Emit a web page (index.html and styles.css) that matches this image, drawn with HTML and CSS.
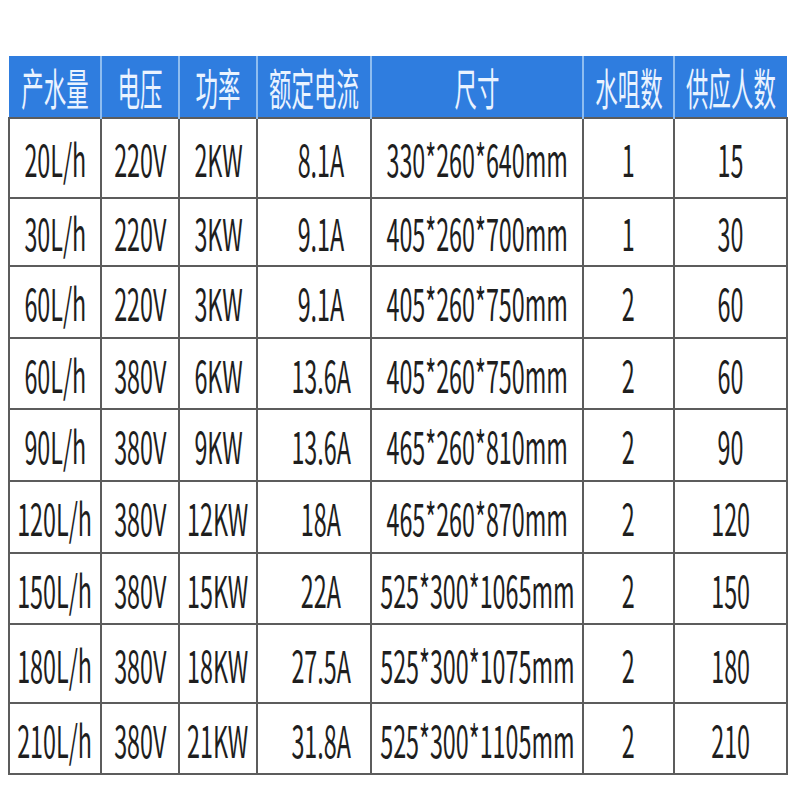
FILE: index.html
```html
<!DOCTYPE html>
<html lang="zh">
<head>
<meta charset="utf-8">
<title>产品参数表</title>
<link rel="stylesheet" href="styles.css">
</head>
<body>
<table class="spec">
  <colgroup>
    <col class="c1"><col class="c2"><col class="c3"><col class="c4"><col class="c5"><col class="c6"><col class="c7">
  </colgroup>
  <thead>
    <tr>
      <th><div class="cell"><span>产水量</span></div></th>
      <th><div class="cell"><span>电压</span></div></th>
      <th><div class="cell"><span>功率</span></div></th>
      <th><div class="cell"><span>额定电流</span></div></th>
      <th><div class="cell"><span>尺寸</span></div></th>
      <th><div class="cell"><span>水咀数</span></div></th>
      <th><div class="cell"><span>供应人数</span></div></th>
    </tr>
  </thead>
  <tbody>
    <tr><td><div class="cell"><span>20L/h</span></div></td><td><div class="cell"><span>220V</span></div></td><td><div class="cell"><span>2KW</span></div></td><td class="amp"><div class="cell"><span>8.1A</span></div></td><td><div class="cell"><span>330*260*640mm</span></div></td><td><div class="cell"><span>1</span></div></td><td><div class="cell"><span>15</span></div></td></tr>
    <tr><td><div class="cell"><span>30L/h</span></div></td><td><div class="cell"><span>220V</span></div></td><td><div class="cell"><span>3KW</span></div></td><td class="amp"><div class="cell"><span>9.1A</span></div></td><td><div class="cell"><span>405*260*700mm</span></div></td><td><div class="cell"><span>1</span></div></td><td><div class="cell"><span>30</span></div></td></tr>
    <tr><td><div class="cell"><span>60L/h</span></div></td><td><div class="cell"><span>220V</span></div></td><td><div class="cell"><span>3KW</span></div></td><td class="amp"><div class="cell"><span>9.1A</span></div></td><td><div class="cell"><span>405*260*750mm</span></div></td><td><div class="cell"><span>2</span></div></td><td><div class="cell"><span>60</span></div></td></tr>
    <tr><td><div class="cell"><span>60L/h</span></div></td><td><div class="cell"><span>380V</span></div></td><td><div class="cell"><span>6KW</span></div></td><td class="amp"><div class="cell"><span>13.6A</span></div></td><td><div class="cell"><span>405*260*750mm</span></div></td><td><div class="cell"><span>2</span></div></td><td><div class="cell"><span>60</span></div></td></tr>
    <tr><td><div class="cell"><span>90L/h</span></div></td><td><div class="cell"><span>380V</span></div></td><td><div class="cell"><span>9KW</span></div></td><td class="amp"><div class="cell"><span>13.6A</span></div></td><td><div class="cell"><span>465*260*810mm</span></div></td><td><div class="cell"><span>2</span></div></td><td><div class="cell"><span>90</span></div></td></tr>
    <tr><td><div class="cell"><span>120L/h</span></div></td><td><div class="cell"><span>380V</span></div></td><td><div class="cell"><span>12KW</span></div></td><td class="amp"><div class="cell"><span>18A</span></div></td><td><div class="cell"><span>465*260*870mm</span></div></td><td><div class="cell"><span>2</span></div></td><td><div class="cell"><span>120</span></div></td></tr>
    <tr><td><div class="cell"><span>150L/h</span></div></td><td><div class="cell"><span>380V</span></div></td><td><div class="cell"><span>15KW</span></div></td><td class="amp"><div class="cell"><span>22A</span></div></td><td><div class="cell"><span>525*300*1065mm</span></div></td><td><div class="cell"><span>2</span></div></td><td><div class="cell"><span>150</span></div></td></tr>
    <tr><td><div class="cell"><span>180L/h</span></div></td><td><div class="cell"><span>380V</span></div></td><td><div class="cell"><span>18KW</span></div></td><td class="amp"><div class="cell"><span>27.5A</span></div></td><td><div class="cell"><span>525*300*1075mm</span></div></td><td><div class="cell"><span>2</span></div></td><td><div class="cell"><span>180</span></div></td></tr>
    <tr><td><div class="cell"><span>210L/h</span></div></td><td><div class="cell"><span>380V</span></div></td><td><div class="cell"><span>21KW</span></div></td><td class="amp"><div class="cell"><span>31.8A</span></div></td><td><div class="cell"><span>525*300*1105mm</span></div></td><td><div class="cell"><span>2</span></div></td><td><div class="cell"><span>210</span></div></td></tr>
  </tbody>
</table>
</body>
</html>
```

FILE: styles.css
```css
html, body {
  margin: 0;
  padding: 0;
  background: #ffffff;
}

body {
  font-family: "Noto Sans CJK SC", "Noto Sans", sans-serif;
  padding: 56px 0 0 8px;
}

.spec {
  border-collapse: collapse;
  table-layout: fixed;
  width: 778px;
}

.c1 { width: 92px; }
.c2 { width: 78px; }
.c3 { width: 78px; }
.c4 { width: 114px; }
.c5 { width: 212px; }
.c6 { width: 91px; }
.c7 { width: 113px; }

.spec th,
.spec td {
  padding: 0;
  overflow: visible;
}

.spec th {
  background: #2f7ddf;
  color: #eaf3ff;
  font-weight: 400;
  height: 61px;
  border-left: 2px solid #8fbdf0;
  border-right: 2px solid #8fbdf0;
  border-top: 0;
  border-bottom: 0;
}

.spec th:first-child { border-left: 0; }
.spec th:last-child { border-right: 0; }

.spec td {
  border: 2px solid #5c5c5c;
  color: #1e1e1e;
}

.spec td.amp .cell {
  padding-left: 14px;
}

.cell {
  display: flex;
  justify-content: center;
  align-items: center;
  height: 100%;
  white-space: nowrap;
  font-size: 44px;
  line-height: 1;
}

.cell span {
  display: inline-block;
  flex-shrink: 0;
  transform: scaleX(0.53);
}

.spec th .cell span {
  transform: scaleX(0.51);
}

.spec tbody tr:nth-child(1) { height: 80px; }
.spec tbody tr:nth-child(2) { height: 68px; }
.spec tbody tr:nth-child(3) { height: 72px; }
.spec tbody tr:nth-child(4) { height: 71px; }
.spec tbody tr:nth-child(5) { height: 72px; }
.spec tbody tr:nth-child(6) { height: 72px; }
.spec tbody tr:nth-child(7) { height: 71px; }
.spec tbody tr:nth-child(8) { height: 79px; }
.spec tbody tr:nth-child(9) { height: 71px; }
```
